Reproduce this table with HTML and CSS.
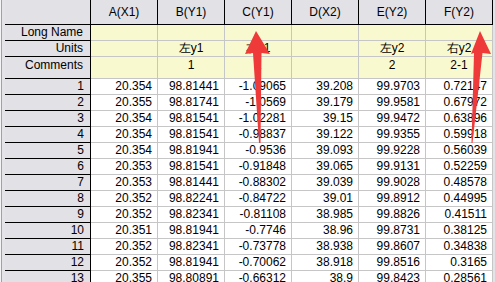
FILE: index.html
```
<!DOCTYPE html>
<html lang="en">
<head>
    <meta charset="UTF-8">
    <title>Worksheet</title>
    <link rel="stylesheet" href="styles.css">
</head>
<body>
    <div class="sheet">
        <div class="edge"></div>
        <table class="grid">
            <colgroup>
                <col class="c-label">
                <col class="c-data"><col class="c-data"><col class="c-data">
                <col class="c-data"><col class="c-data"><col class="c-data">
            </colgroup>
            <tr class="head">
                <th class="corner"></th>
                <th>A(X1)</th><th>B(Y1)</th><th>C(Y1)</th><th>D(X2)</th><th>E(Y2)</th><th>F(Y2)</th>
            </tr>
            <tr class="meta">
                <th>Long Name</th><td></td><td></td><td></td><td></td><td></td><td></td>
            </tr>
            <tr class="meta">
                <th>Units</th><td></td><td>左y1</td><td>右y1</td><td></td><td>左y2</td><td>右y2</td>
            </tr>
            <tr class="meta comments">
                <th>Comments</th><td></td><td>1</td><td>1</td><td></td><td>2</td><td>2-1</td>
            </tr>
            <tr class="row"><th>1</th><td>20.354</td><td>98.81441</td><td>-1.09065</td><td>39.208</td><td>99.9703</td><td>0.72147</td></tr>
            <tr class="row"><th>2</th><td>20.355</td><td>98.81741</td><td>-1.0569</td><td>39.179</td><td>99.9581</td><td>0.67972</td></tr>
            <tr class="row"><th>3</th><td>20.354</td><td>98.81541</td><td>-1.02281</td><td>39.15</td><td>99.9472</td><td>0.63896</td></tr>
            <tr class="row"><th>4</th><td>20.354</td><td>98.81541</td><td>-0.98837</td><td>39.122</td><td>99.9355</td><td>0.59918</td></tr>
            <tr class="row"><th>5</th><td>20.354</td><td>98.81941</td><td>-0.9536</td><td>39.093</td><td>99.9228</td><td>0.56039</td></tr>
            <tr class="row"><th>6</th><td>20.353</td><td>98.81541</td><td>-0.91848</td><td>39.065</td><td>99.9131</td><td>0.52259</td></tr>
            <tr class="row"><th>7</th><td>20.353</td><td>98.81441</td><td>-0.88302</td><td>39.039</td><td>99.9028</td><td>0.48578</td></tr>
            <tr class="row"><th>8</th><td>20.352</td><td>98.82241</td><td>-0.84722</td><td>39.01</td><td>99.8912</td><td>0.44995</td></tr>
            <tr class="row"><th>9</th><td>20.352</td><td>98.82341</td><td>-0.81108</td><td>38.985</td><td>99.8826</td><td>0.41511</td></tr>
            <tr class="row"><th>10</th><td>20.351</td><td>98.81941</td><td>-0.7746</td><td>38.96</td><td>99.8731</td><td>0.38125</td></tr>
            <tr class="row"><th>11</th><td>20.352</td><td>98.82341</td><td>-0.73778</td><td>38.938</td><td>99.8607</td><td>0.34838</td></tr>
            <tr class="row"><th>12</th><td>20.352</td><td>98.81941</td><td>-0.70062</td><td>38.918</td><td>99.8516</td><td>0.3165</td></tr>
            <tr class="row"><th>13</th><td>20.355</td><td>98.80891</td><td>-0.66312</td><td>38.9</td><td>99.8423</td><td>0.28561</td></tr>
        </table>
        <div class="edge-right"></div>
    </div>

    <svg class="arrows" width="495" height="282" viewBox="0 0 495 282">
        <polygon points="256,31 270,54 261.5,53 260.5,143 259,143 253,53 245,54" />
        <polygon points="480,31 491,54 482.5,53 472.5,143 471.5,143 474,53 471,54" />
    </svg>
</body>
</html>
```

FILE: styles.css
```
body {
    margin: 0;
    width: 495px;
    height: 282px;
    overflow: hidden;
    position: relative;
    background: #e6e6ea;
    font-family: "Liberation Sans", Arial, sans-serif;
    font-size: 12px;
    color: #000;
}

.sheet {
    display: flex;
    align-items: flex-start;
}

.edge {
    width: 5px;
    height: 282px;
    flex: none;
    background: #e4e4e8;
    box-shadow: inset 1px 0 #f4f4f6, inset 2px 0 #a0a0a8;
}

.edge-right {
    width: 2px;
    height: 282px;
    flex: none;
    background: #e4e4e8;
}

.grid {
    border-collapse: separate;
    border-spacing: 0;
    table-layout: fixed;
    width: 488px;
    flex: none;
    background: #fff;
}

.c-label {
    width: 86px;
}

.c-data {
    width: 67px;
}

.grid th,
.grid td {
    box-sizing: border-box;
    padding: 0;
    height: 16px;
    line-height: 15px;
    white-space: nowrap;
    overflow: hidden;
    font-weight: normal;
    border-right: 1px solid #c6c6c6;
    border-bottom: 1px solid #c6c6c6;
}

.grid th {
    background: #e1e1e6;
    border-right: 1px solid #000;
    border-bottom: 1px solid #000;
    text-align: right;
    padding-right: 6px;
}

.head th {
    height: 25px;
    text-align: center;
    padding-right: 0;
    padding-top: 1px;
}

.meta th {
    padding-right: 7px;
}

.meta td {
    background: #f9f9d0;
    text-align: center;
}

.comments th,
.comments td {
    height: 22px;
    vertical-align: top;
    padding-top: 1px;
}

.row td {
    text-align: right;
    padding-right: 5px;
}

.arrows {
    position: absolute;
    left: 0;
    top: 0;
    pointer-events: none;
}

.arrows polygon {
    fill: #ef3a3a;
}
```
